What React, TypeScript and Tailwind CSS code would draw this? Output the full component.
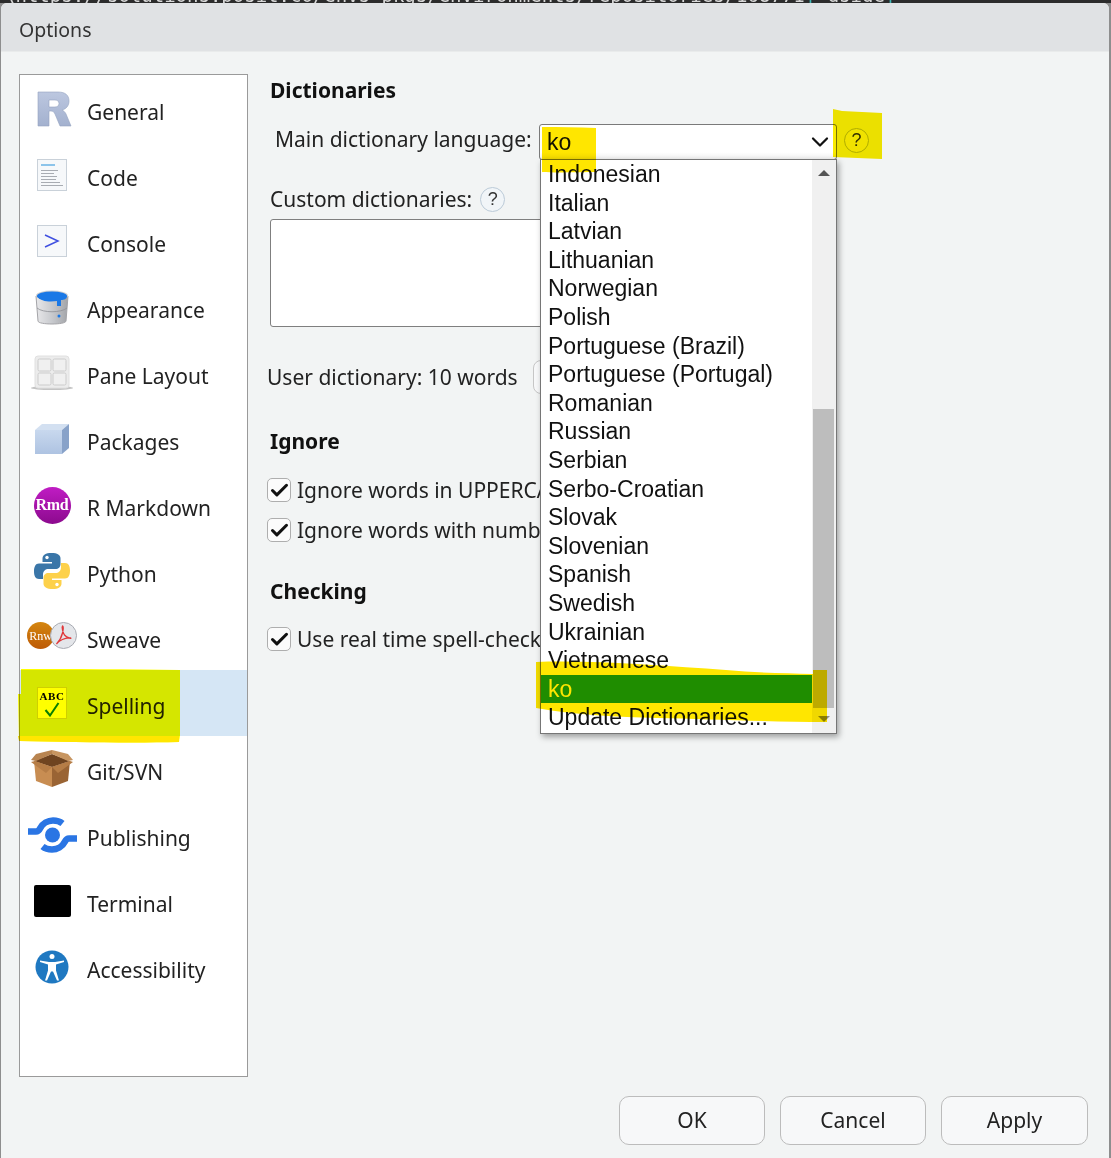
import { Check, ChevronDown } from "lucide-react"

const uiFont = "font-['Noto_Sans',sans-serif]"

const navItems = [
  { label: "General", icon: <RIcon /> },
  { label: "Code", icon: <CodeIcon /> },
  { label: "Console", icon: <ConsoleIcon /> },
  { label: "Appearance", icon: <BucketIcon /> },
  { label: "Pane Layout", icon: <PaneIcon /> },
  { label: "Packages", icon: <PackageIcon /> },
  { label: "R Markdown", icon: <RmdIcon /> },
  { label: "Python", icon: <PythonIcon /> },
  { label: "Sweave", icon: <SweaveIcon /> },
  { label: "Spelling", icon: <SpellingIcon />, active: true },
  { label: "Git/SVN", icon: <BoxIcon /> },
  { label: "Publishing", icon: <PublishIcon /> },
  { label: "Terminal", icon: <TerminalIcon /> },
  { label: "Accessibility", icon: <AccessIcon /> },
]

const languages = [
  "Indonesian",
  "Italian",
  "Latvian",
  "Lithuanian",
  "Norwegian",
  "Polish",
  "Portuguese (Brazil)",
  "Portuguese (Portugal)",
  "Romanian",
  "Russian",
  "Serbian",
  "Serbo-Croatian",
  "Slovak",
  "Slovenian",
  "Spanish",
  "Swedish",
  "Ukrainian",
  "Vietnamese",
  "ko",
  "Update Dictionaries...",
]

function RIcon() {
  return (
    <svg className="ml-[3px]" width="36" height="36" viewBox="0 0 36 36">
      <defs>
        <linearGradient id="rg" x1="0" y1="0" x2="0" y2="1">
          <stop offset="0" stopColor="#bcc7e0" />
          <stop offset="1" stopColor="#a3b1cf" />
        </linearGradient>
      </defs>
      <path
        fillRule="evenodd"
        fill="url(#rg)"
        stroke="#93a2c0"
        strokeWidth="0.6"
        d="M2 1h20c7 0 11 3 11 9 0 5-3 8-7 9 2 1 3 2 4 4l5 12H24l-5-12c-1-2-2-3-4-3h-2v15H2zM13 9v7h6c2 0 4-1 4-3.500S21 9 19 9z"
      />
    </svg>
  )
}

function CodeIcon() {
  return (
    <div className="flex h-8 w-[30px] flex-col gap-[2px] border border-[#c9d1d9] bg-[#f6f8fa] px-[3px] pt-[4px]">
      <div className="mb-[2px] h-[2px] w-[14px] bg-[#8cc4ea]" />
      <div className="h-[1px] w-[17px] bg-[#a8acb2]" />
      <div className="h-[1px] w-[13px] bg-[#a8acb2]" />
      <div className="h-[1px] w-[16px] bg-[#a8acb2]" />
      <div className="h-[1px] w-[15px] bg-[#a8acb2]" />
      <div className="h-[1px] w-[19px] bg-[#a8acb2]" />
      <div className="h-[1px] w-[22px] bg-[#a8acb2]" />
    </div>
  )
}

function ConsoleIcon() {
  return (
    <div className="flex h-8 w-[30px] items-center justify-center border border-[#c9d1d9] bg-[#f6f8fa]">
      <svg width="18" height="16" viewBox="0 0 18 16">
        <path d="M2 2l13 6-13 6" fill="none" stroke="#3f4fe0" strokeWidth="1.500" />
      </svg>
    </div>
  )
}

function BucketIcon() {
  return (
    <svg width="36" height="36" viewBox="0 0 36 36">
      <defs>
        <linearGradient id="bk" x1="0" y1="0" x2="1" y2="0">
          <stop offset="0" stopColor="#e8e8ea" />
          <stop offset="0.5" stopColor="#c8cace" />
          <stop offset="1" stopColor="#a2a4a8" />
        </linearGradient>
      </defs>
      <path d="M2 7l2 25c0 4 28 4 28 0l2-25z" fill="url(#bk)" stroke="#a4a4a8" />
      <path d="M3 19c6 5 24 5 30 0" fill="none" stroke="#8f9195" strokeWidth="0.8" />
      <ellipse cx="18" cy="6.500" rx="16" ry="5" fill="#cfd0d2" />
      <ellipse cx="18" cy="7" rx="15" ry="4.500" fill="#1a78e6" />
      <path d="M3 7h30c0 3-3 4-6 4v6h-4v-5c-6 1-17 1-20-5z" fill="#1a78e6" />
      <circle cx="25" cy="27" r="1.500" fill="#1a78e6" />
    </svg>
  )
}

function PaneIcon() {
  return (
    <svg width="44" height="36" viewBox="0 0 44 36">
      <ellipse cx="22" cy="33" rx="21" ry="2" fill="#c4c4c4" />
      <rect x="5" y="1" width="34" height="32" rx="3" fill="#ececec" stroke="#e0e0e0" />
      <rect x="8" y="4" width="13" height="12" rx="1.500" fill="#f0f0f0" stroke="#cccccc" />
      <rect x="23" y="4" width="13" height="12" rx="1.500" fill="#f0f0f0" stroke="#cccccc" />
      <rect x="8" y="18" width="13" height="12" rx="1.500" fill="#f0f0f0" stroke="#cccccc" />
      <rect x="23" y="18" width="13" height="12" rx="1.500" fill="#f0f0f0" stroke="#cccccc" />
    </svg>
  )
}

function PackageIcon() {
  return (
    <svg width="36" height="32" viewBox="0 0 36 32">
      <defs>
        <linearGradient id="pk" x1="0" y1="0" x2="0" y2="1">
          <stop offset="0" stopColor="#c8d8ee" />
          <stop offset="1" stopColor="#aec3e2" />
        </linearGradient>
      </defs>
      <path d="M1 7h27v24H1z" fill="url(#pk)" />
      <path d="M1 7l7-6h27l-7 6z" fill="#d3e0f1" />
      <path d="M28 7l7-6v24l-7 6z" fill="#88a2c9" />
    </svg>
  )
}

function RmdIcon() {
  return (
    <div className="flex h-[37px] w-[37px] items-center justify-center rounded-full bg-gradient-to-b from-[#c01cc4] to-[#8c0a8e] font-['Liberation_Serif',serif] text-[16px] font-bold tracking-[-0.3px] text-white">
      Rmd
    </div>
  )
}

function PythonIcon() {
  return (
    <svg width="38" height="38" viewBox="0 0 38 38">
      <path
        d="M18.500 1c-6 0-9 2-9 5.500V10h9.500v1.500H6C2.500 11.500 1 15 1 19.500S2.500 27 6 27h4v-4.500c0-3.500 2.500-5.500 5.500-5.500h7c3 0 5-2 5-5V6.500C27.500 3 24.500 1 18.500 1z"
        fill="#3a76a8"
      />
      <path
        d="M19.500 37c6 0 9-2 9-5.500V28H19v-1.500h13c3.500 0 5-3.500 5-8S35.500 11 32 11h-4v4.500c0 3.500-2.500 5.500-5.500 5.500h-7c-3 0-5 2-5 5v5.500c0 3.500 3 5.500 9.500 5.500z"
        fill="#fdd14b"
      />
      <circle cx="14" cy="5.500" r="1.700" fill="#fff" />
      <circle cx="24" cy="32.500" r="1.700" fill="#fff" />
    </svg>
  )
}

function SweaveIcon() {
  return (
    <div className="-mt-[3px] flex items-center">
      <div className="flex h-[27px] w-[27px] items-center justify-center rounded-full bg-gradient-to-b from-[#d4860f] to-[#bd5a06] font-['Liberation_Serif',serif] text-[12px] text-white">
        Rnw
      </div>
      <svg className="-ml-[4px]" width="27" height="27" viewBox="0 0 27 27">
        <circle cx="13.500" cy="13.500" r="13" fill="#e4e6ea" stroke="#a8abb2" />
        <path
          d="M12.500 4c1 0 1 3 0 7-1 4-4 9-6 11 2-3 9-7 14-6 2 .5-3 .5-6-3-1.500-2-3-8-2-9z"
          fill="none"
          stroke="#e0383b"
          strokeWidth="1.300"
        />
      </svg>
    </div>
  )
}

function SpellingIcon() {
  return (
    <div className="flex h-8 w-[30px] flex-col items-center border border-[#cfcf33] bg-white leading-none">
      <span className="mt-[3px] font-['Liberation_Serif',serif] text-[11px] font-bold tracking-[0.6px] text-black">
        ABC
      </span>
      <svg width="16" height="15" viewBox="0 0 16 15">
        <path d="M1.500 8l4.500 5.500 8.500-12.500" fill="none" stroke="#0a7f0a" strokeWidth="2" />
      </svg>
    </div>
  )
}

function BoxIcon() {
  return (
    <svg width="44" height="38" viewBox="0 0 44 38">
      <path d="M4 11l18 6v20L6 31z" fill="#c88d52" />
      <path d="M22 17l18-6-2 20-16 6z" fill="#9a6434" />
      <path d="M4 11L22 4l18 7-18 6z" fill="#6f4420" />
      <path d="M22 0l16 4 5 6-5 1-16-7z" fill="#c79560" />
      <path d="M22 0L6 4l-5 6 5 1 16-7z" fill="#b88450" />
      <path d="M1 12l4-1 17 6-6 6zM43 12l-3-1-18 6 6 6z" fill="#b67d46" />
    </svg>
  )
}

function PublishIcon() {
  return (
    <svg width="49" height="36" viewBox="0 0 49 36">
      <path
        d="M0 14.500H8c2 0 3-1 4-3 2.500-5 8-8 13-8 4 0 7 1 9.500 3M49 21.500H41c-2 0-3 1-4 3-2.500 5-8 8-13 8-4 0-7-1-9.500-3"
        fill="none"
        stroke="#2a75e4"
        strokeWidth="6.500"
      />
      <circle cx="24.500" cy="18" r="7.500" fill="#2a75e4" />
    </svg>
  )
}

function TerminalIcon() {
  return <div className="h-8 w-[37px] rounded-[2px] bg-black" />
}

function AccessIcon() {
  return (
    <svg width="34" height="34" viewBox="0 0 34 34">
      <circle cx="17" cy="17" r="16.500" fill="#1f78c1" />
      <circle cx="17" cy="6.500" r="2.500" fill="#fff" />
      <path d="M5 10.500l9 1.500h6l9-1.500v1.500l-8 2.500v6l3 10h-2l-4-9h-2l-4 9h-2l3-10v-6l-8-2.500z" fill="#fff" />
    </svg>
  )
}

function HelpIcon({ tint }: { tint?: boolean }) {
  return (
    <div
      className={
        tint
          ? "flex h-[25px] w-[25px] items-center justify-center rounded-full border border-[#b4bc2a] bg-[#f7f7f7] font-['Liberation_Sans',sans-serif] text-[18px] text-[#333]"
          : "flex h-[25px] w-[25px] items-center justify-center rounded-full border border-[#bccbd8] bg-[#f1f5f8] font-['Liberation_Sans',sans-serif] text-[18px] text-[#333]"
      }
    >
      ?
    </div>
  )
}

function CheckRow({ label, className }: { label: string; className?: string }) {
  return (
    <div className={`flex h-6 items-center whitespace-nowrap text-[21px] ${className ?? ""}`}>
      <div className="mr-[6px] flex h-6 w-6 shrink-0 items-center justify-center rounded-[5px] border border-[#aeaeae] bg-[#fbfbfb]">
        <Check size={21} strokeWidth={3.5} className="text-[#111]" />
      </div>
      <span className="mt-[1px]">{label}</span>
    </div>
  )
}

function FooterButton({ label, className }: { label: string; className: string }) {
  return (
    <button
      className={`h-[49px] rounded-[10px] border border-[#bcbcbc] bg-[#f7f8f9] text-[21px] text-[#222] ${className}`}
    >
      {label}
    </button>
  )
}

export default function App() {
  return (
    <div className={`relative flex h-[1158px] w-[1111px] flex-col overflow-hidden bg-[#8e8e8e] ${uiFont} text-[#222]`}>
      {/* Terminal text peeking out behind the dialog */}
      <div className="h-[3px] overflow-hidden bg-[#2c2c2c] pl-[4px] font-['DejaVu_Sans_Mono',monospace] text-[19px] whitespace-nowrap text-[#d8d8d8]">
        <div className="-mt-[14px] leading-[19px]">
          \nttps://solutions.posit.co/envs-pkgs/environments/repositories/168771
          <span className="text-[#3fb8b8]">|</span> dside<span className="text-[#3fb8b8]">|</span>
        </div>
      </div>

      <div className="mr-[2px] ml-[1px] flex min-h-0 flex-1 flex-col rounded-t-[6px] bg-[#f2f4f4]">
        <div className="flex h-[49px] shrink-0 items-center rounded-t-[6px] border-b border-[#e9ebeb] bg-[#e0e2e4] pt-[5px] pl-[18px] text-[19.5px] text-[#333]">
          Options
        </div>

        <div className="flex min-h-0 flex-1">
          <div className="mt-[22px] ml-[18px] h-[1003px] w-[229px] shrink-0 border border-[#9a9a9a] bg-white pt-[1px]">
            {navItems.map((item) => (
              <div
                key={item.label}
                className={`flex h-[66px] items-center ${item.active ? "bg-[#d5e6f5]" : ""}`}
              >
                <div className="mr-[3px] flex h-[66px] w-[64px] shrink-0 items-center justify-center">
                  {item.icon}
                </div>
                <span className="mt-[7px] text-[21px] leading-none whitespace-nowrap text-[#222]">{item.label}</span>
              </div>
            ))}
          </div>

          <div className="ml-[19px] flex min-w-0 flex-1 flex-col whitespace-nowrap">
            <div className="mt-[24px] ml-[3px] h-[28px] text-[21px] leading-[28px] font-bold text-[#111]">Dictionaries</div>

            <div className="mt-[20px] ml-[8px] flex h-[36px] items-center text-[21px]">
              <span className="w-[264px] pb-[5px]">Main dictionary language:</span>
              <div className="flex h-[36px] w-[298px] items-center justify-between rounded-[3px] border border-[#7a7a7a] bg-gradient-to-b from-white from-80% to-[#f0f0f0] pr-[2px] pl-[7px] font-['Liberation_Sans',sans-serif] text-[23px] text-[#111]">
                ko
                <ChevronDown size={28} strokeWidth={1.9} className="text-[#111]" />
              </div>
              <div className="mb-[4px] ml-[7px]">
                <HelpIcon tint />
              </div>
            </div>

            <div className="mt-[22px] ml-[3px] flex h-[34px] items-center gap-[8px] text-[21px]">
              <span className="mt-[2px]">Custom dictionaries:</span>
              <HelpIcon />
            </div>
            <div className="mt-[3px] ml-[3px] h-[108px] w-[420px] rounded-[3px] border border-[#7f7f7f] bg-white" />

            <div className="mt-[33px] flex h-[34px] items-center text-[21px]">
              <span className="mt-[2px] w-[266px]">User dictionary: 10 words</span>
              <div className="h-[34px] w-[150px] rounded-[8px] border border-[#c6c6c6] bg-[#f7f8f9]" />
            </div>

            <div className="mt-[33px] ml-[3px] h-[28px] text-[21px] leading-[28px] font-bold text-[#111]">Ignore</div>

            <CheckRow label="Ignore words in UPPERCASE" className="mt-[23px]" />
            <CheckRow label="Ignore words with numbers" className="mt-[16px]" />

            <div className="mt-[35px] ml-[3px] h-[28px] text-[21px] leading-[28px] font-bold text-[#111]">Checking</div>

            <CheckRow label="Use real time spell-checking" className="mt-[22px]" />
          </div>
        </div>

        <div className="flex shrink-0 justify-end gap-[15px] pr-[21px] pb-[13px]">
          <FooterButton label="OK" className="w-[146px]" />
          <FooterButton label="Cancel" className="w-[146px]" />
          <FooterButton label="Apply" className="w-[147px]" />
        </div>
      </div>

      {/* Open combobox popup */}
      <div className="absolute top-[159px] left-[540px] flex h-[575px] w-[297px] border border-[#767676] bg-white font-['Liberation_Sans',sans-serif] text-[23px] leading-[28.6px] text-[#111] shadow-[2px_3px_6px_rgba(0,0,0,0.35)]">
        <div className="w-[271px]">
          {languages.map((lang) => (
            <div
              key={lang}
              className={`h-[28.6px] pl-[7px] whitespace-nowrap ${lang === "ko" ? "bg-[#1f9c00] text-white" : ""}`}
            >
              {lang}
            </div>
          ))}
        </div>
        <div className="flex flex-1 flex-col items-center bg-[#f0f0f0]">
          <div className="mt-[10px] h-0 w-0 border-r-[6px] border-b-[6px] border-l-[6px] border-r-transparent border-b-[#555] border-l-transparent" />
          <div className="mt-[233px] ml-[-2px] h-[299px] w-[21px] bg-[#bdbdbd]" />
          <div className="mt-[8px] h-0 w-0 border-t-[6px] border-r-[6px] border-l-[6px] border-t-[#8a8a8a] border-r-transparent border-l-transparent" />
        </div>
      </div>

      {/* Yellow marker strokes drawn over the screenshot */}
      <svg className="pointer-events-none absolute top-0 left-0 mix-blend-multiply" width="1111" height="1158" viewBox="0 0 1111 1158">
        <path d="M21 669c50 0 110 0 159 1v24H21z" fill="#ffff00" />
        <path d="M21 694h159v42H180l-1 6c-50 1-110 0-160-1l-1-47z" fill="#ffff00" />
        <path d="M18 736h161v6c-50 1-110 0-160-1z" fill="#ffe600" />
        <path d="M542 127c18 0 36 0 54 1v44c-14 0-40 1-54 0z" fill="#ffe600" />
        <path d="M833 109l9 2 40 2v46l-49-2z" fill="#f8ea00" />
        <path d="M536 662c60-2 130 4 190 8 30 3 60 3 87 4v-4h14v52c-60 0-120-3-170-4-40-1-80-3-121-10z" fill="#ffe600" />
      </svg>
    </div>
  )
}
